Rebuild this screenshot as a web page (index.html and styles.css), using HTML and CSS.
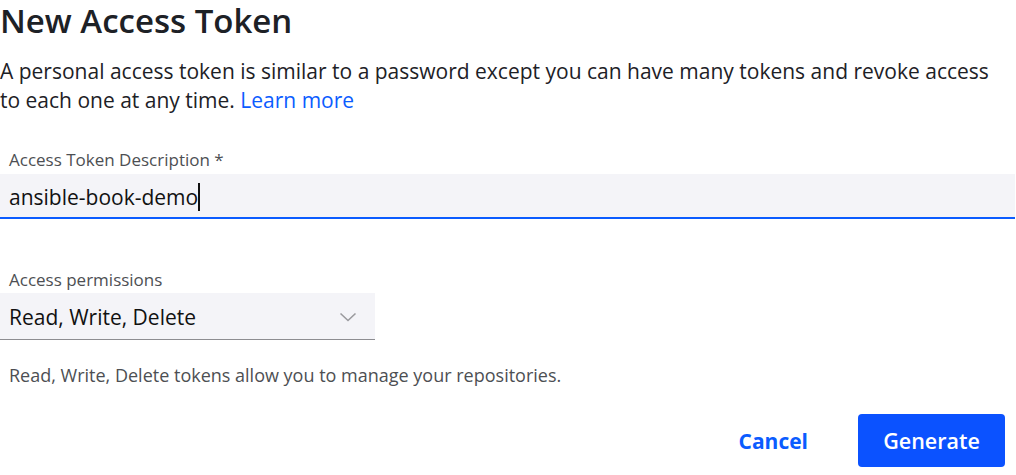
FILE: index.html
```html
<!DOCTYPE html>
<html>
<head>
<meta charset="utf-8">
<link rel="stylesheet" href="styles.css">
</head>
<body>
<div class="page">
  <h1 class="title">New Access Token</h1>
  <p class="intro">A personal access token is similar to a password except you can have many tokens and revoke access to each one at any time. <a class="link" href="#">Learn more</a></p>

  <div class="field">
    <label class="label">Access Token Description *</label>
    <div class="input"><span class="value">ansible-book-demo</span><span class="caret"></span></div>
  </div>

  <div class="field perms">
    <label class="label">Access permissions</label>
    <div class="select">
      <span class="value">Read, Write, Delete</span>
      <svg class="chev" width="18" height="10" viewBox="0 0 18 10"><path d="M1.5 1.5 L9 8.5 L16.5 1.5" fill="none" stroke="#9a9a9e" stroke-width="1.6"/></svg>
    </div>
  </div>

  <p class="help">Read, Write, Delete tokens allow you to manage your repositories.</p>

  <div class="actions">
    <button class="btn cancel">Cancel</button>
    <button class="btn primary">Generate</button>
  </div>
</div>
</body>
</html>
```
FILE: styles.css
```css
* { box-sizing: border-box; }
body {
  margin: 0;
  background: #fff;
  font-family: "Open Sans", "Noto Sans", sans-serif;
  color: #1f2328;
}
.page {
  width: 1016px;
  height: 475px;
  overflow: hidden;
}
.title {
  margin: 0;
  font-size: 33px;
  font-weight: 600;
  line-height: 42px;
  color: #1d2126;
}
.intro {
  margin: 15px 0 0 0;
  max-width: 1005px;
  font-size: 21px;
  line-height: 29px;
  color: #1d2126;
}
.link { color: #0b5cff; text-decoration: none; }
.field { margin-top: 34px; }
.label {
  display: block;
  padding-left: 9px;
  font-size: 17px;
  line-height: 22px;
  color: #4d4f53;
}
.input {
  margin-top: 3px;
  height: 45px;
  background: #f4f4f8;
  border-bottom: 2px solid #0b5cff;
  display: flex;
  align-items: center;
  padding: 2px 0 0 9px;
  width: 1015px;
}
.value { font-size: 21px; color: #111; }
.caret { width: 1.5px; height: 28px; background: #111; margin-left: 0; }
.perms { margin-top: 50px; }
.select {
  margin-top: 2px;
  width: 375px;
  height: 47px;
  background: #f4f4f8;
  border-bottom: 1px solid #8d8d91;
  display: flex;
  align-items: center;
  justify-content: space-between;
  padding: 1px 18px 0 9px;
}
.chev { display: block; margin-top: 0; }
.help {
  margin: 23px 0 0 0;
  padding-left: 9px;
  font-size: 18px;
  line-height: 24px;
  color: #4d4f53;
}
.actions {
  margin-top: 27px;
  display: flex;
  justify-content: flex-end;
  align-items: center;
  padding-right: 11px;
  gap: 50px;
}
.btn {
  font-family: "Open Sans", "Noto Sans", sans-serif;
  font-size: 21px;
  font-weight: 700;
  border: none;
  cursor: pointer;
}
.cancel { background: none; color: #0b5cff; padding: 0; }
.primary {
  background: #0b52ff;
  color: #fff;
  width: 147px;
  height: 53px;
  border-radius: 4px;
  font-weight: 600;
  font-size: 21.5px;
}
```
